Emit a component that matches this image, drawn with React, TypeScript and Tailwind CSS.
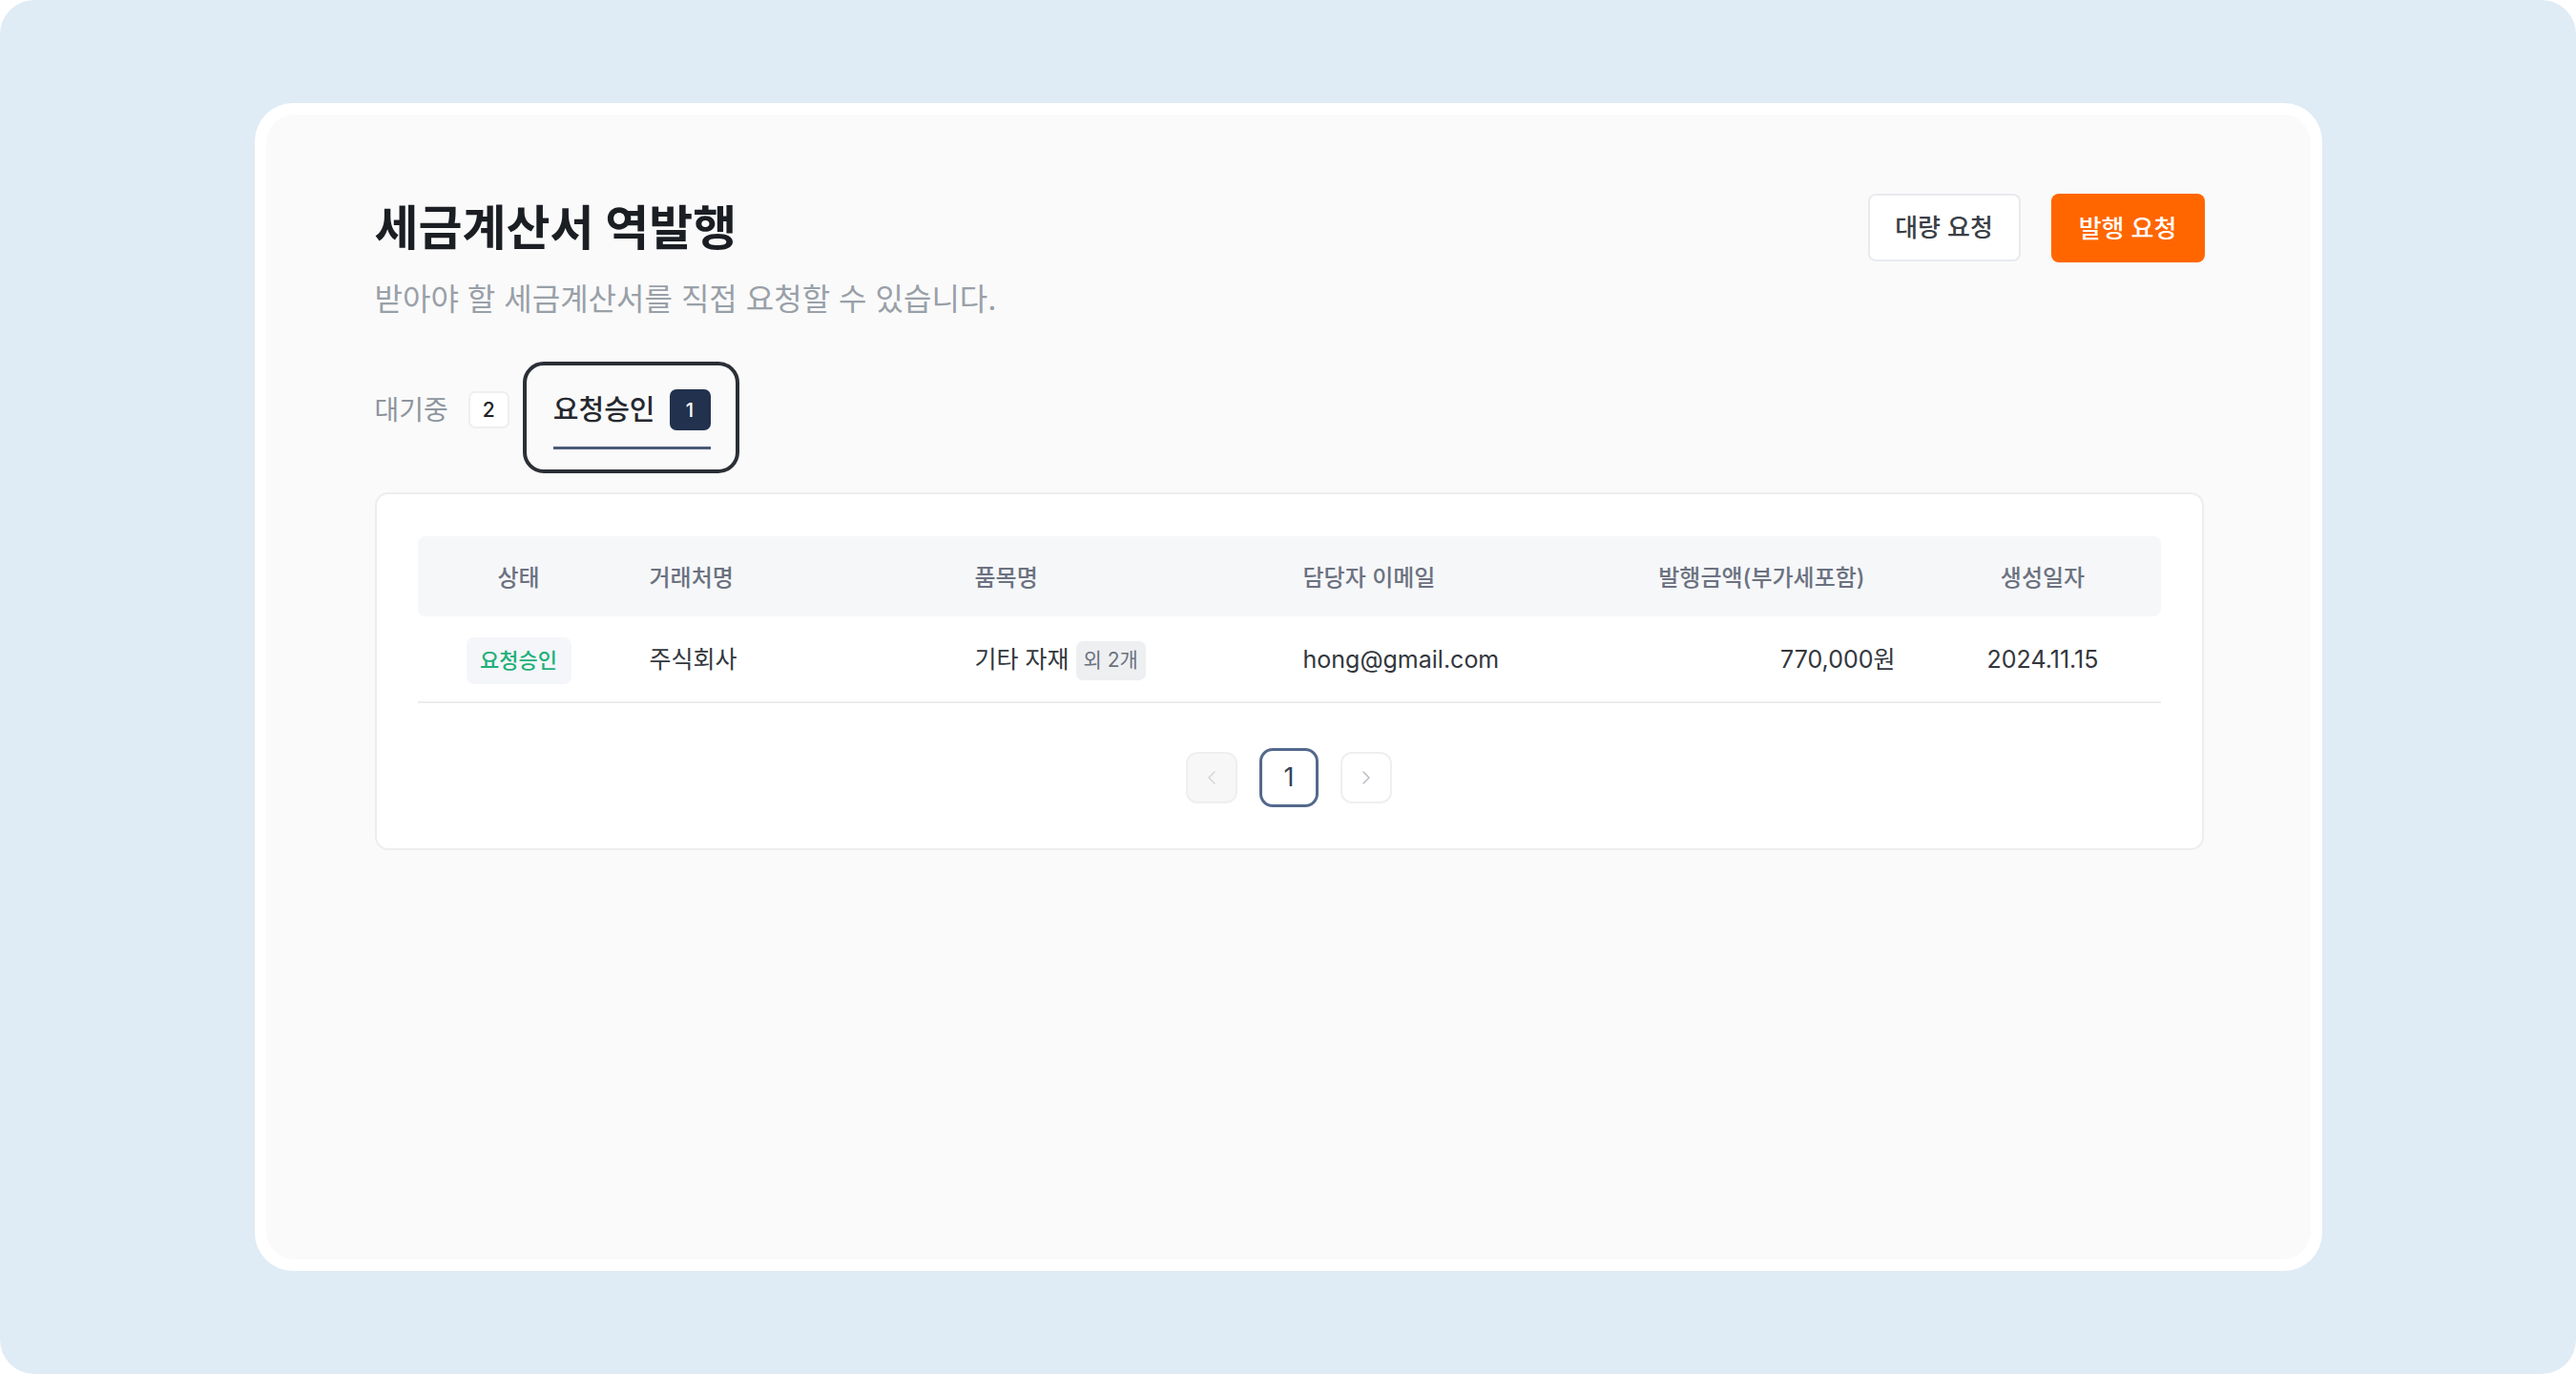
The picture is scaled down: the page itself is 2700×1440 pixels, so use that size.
import React from 'react';
import { ChevronLeft, ChevronRight } from 'lucide-react';

const font = { fontFamily: 'Inter, "Noto Sans CJK KR", sans-serif' };

const cols = 'grid grid-cols-[212px_340px_344px_341px_344px_245px]';

const App: React.FC = () => {
  return (
    <div className="w-[2700px] h-[1440px] bg-white" style={font}>
      <div className="h-full rounded-[36px] bg-[#dfebf5] flex items-center justify-center">
        <div className="w-[2167px] h-[1224px] rounded-[40px] bg-white p-[12px]">
          <div className="h-full rounded-[30px] bg-[#fafafa] pt-[83px] pl-[114px] pr-[112px]">
            {/* Header */}
            <div className="flex justify-between items-start">
              <div>
                <h1 className="text-[50px] leading-[72px] font-bold text-[#1b1e23]">
                  세금계산서 역발행
                </h1>
                <p className="mt-[18px] text-[32px] leading-[42px] text-[#99a0a8]">
                  받아야 할 세금계산서를 직접 요청할 수 있습니다.
                </p>
              </div>
              <div className="flex gap-[32px] mr-[-1px]">
                <button className="w-[160px] h-[71px] rounded-[8px] bg-white border-2 border-[#e8eaee] text-[26px] font-medium text-[#3a3f46]">
                  대량 요청
                </button>
                <button className="w-[161px] h-[72px] rounded-[8px] bg-[#ff6600] text-[26px] font-medium text-white">
                  발행 요청
                </button>
              </div>
            </div>

            {/* Tabs */}
            <div className="mt-[44px] flex items-start">
              <div className="pt-[29px]">
                <div className="h-[43px] flex items-center gap-[21px]">
                  <span className="text-[28px] text-[#8e959e]">대기중</span>
                  <span className="w-[43px] h-[39px] rounded-[7px] bg-white border-2 border-[#efefef] flex items-center justify-center text-[21px] font-medium text-[#222]">
                    2
                  </span>
                </div>
              </div>
              <div className="ml-[14px] border-4 border-[#2b2f36] rounded-[22px] pl-[28px] pr-[26px] pt-[25px] pb-[21px]">
                <div className="h-[43px] flex items-center gap-[15px]">
                  <span className="text-[29px] font-medium text-[#25282e]">요청승인</span>
                  <span className="w-[43px] h-[43px] rounded-[7px] bg-[#22314d] flex items-center justify-center text-[20px] font-medium text-white">
                    1
                  </span>
                </div>
                <div className="mt-[17px] h-[3px] bg-[#4b5b78]" />
              </div>
            </div>

            {/* Table card */}
            <div className="mt-[20px] bg-white border-2 border-[#ededed] rounded-[14px] px-[43px] pt-[44px] pb-[43px]">
              <div className={`${cols} h-[84px] pt-[3px] items-center rounded-[8px] bg-[#f6f7f9] text-[24px] font-medium text-[#6b7280]`}>
                <div className="text-center">상태</div>
                <div className="pl-[31px]">거래처명</div>
                <div className="pl-[32px]">품목명</div>
                <div className="pl-[32px]">담당자 이메일</div>
                <div className="text-center">발행금액(부가세포함)</div>
                <div className="text-center">생성일자</div>
              </div>
              <div className={`${cols} h-[91px] pt-[3px] items-center border-b-2 border-[#ececef] text-[25px] text-[#33373d]`}>
                <div className="flex justify-center">
                  <span className="w-[110px] h-[49px] rounded-[8px] bg-[#f4f6f9] flex items-center justify-center text-[22px] font-medium text-[#1fb07a]">
                    요청승인
                  </span>
                </div>
                <div className="pl-[31px]">주식회사</div>
                <div className="pl-[32px] flex items-center gap-[7px]">
                  <span>기타 자재</span>
                  <span className="h-[41px] px-[8px] rounded-[7px] bg-[#eeeff1] flex items-center text-[21px] text-[#6b7280]">
                    외 2개
                  </span>
                </div>
                <div className="pl-[32px]">hong@gmail.com</div>
                <div className="text-right pr-[32px]">770,000원</div>
                <div className="text-center">2024.11.15</div>
              </div>

              {/* Pagination */}
              <div className="mt-[47px] flex justify-center items-center gap-[23px]">
                <button className="w-[54px] h-[54px] rounded-[12px] border-2 border-[#efeff1] bg-[#f7f7f8] flex items-center justify-center">
                  <ChevronLeft className="w-[24px] h-[24px] text-[#d3d6db]" strokeWidth={1.5} />
                </button>
                <button className="w-[62px] h-[62px] rounded-[14px] border-[3px] border-[#53698c] bg-white flex items-center justify-center text-[27px] text-[#33425c]">
                  1
                </button>
                <button className="w-[54px] h-[54px] rounded-[12px] border-2 border-[#efeff1] bg-white flex items-center justify-center">
                  <ChevronRight className="w-[24px] h-[24px] text-[#b9bec6]" strokeWidth={1.5} />
                </button>
              </div>
            </div>
          </div>
        </div>
      </div>
    </div>
  );
};

export default App;
